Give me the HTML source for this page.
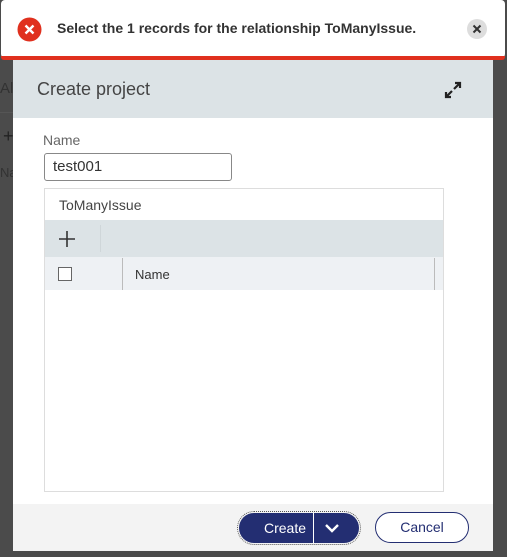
<!DOCTYPE html>
<html><head><style>
body{margin:0;width:507px;height:557px;background:#4b4b4b;font-family:"Liberation Sans",sans-serif;position:relative;overflow:hidden}
.a{position:absolute}
</style></head><body>
<div class="a" style="left:0;top:80px;color:#222;font-size:15px;opacity:.6">All</div>
<div class="a" style="left:0;top:112px;width:13px;height:1px;background:#555"></div>
<div class="a" style="left:3px;top:126px;color:#111;font-size:18px;opacity:.7">+</div>
<div class="a" style="left:0;top:165px;color:#222;font-size:13px;opacity:.6">Na</div>
<div class="a" style="left:13px;top:60px;width:480px;height:491px;background:#fff"></div>
<div class="a" style="left:13px;top:60px;width:480px;height:58px;background:#dce3e6"></div>
<div class="a" style="left:37px;top:79px;font-size:18px;color:#444">Create project</div>
<svg class="a" style="left:444px;top:81px" width="18" height="18" viewBox="0 0 18 18"><path d="M10 8 16 2M11 2h5v5M8 10 2 16M2 11v5h5" stroke="#222" stroke-width="2.2" fill="none"/></svg>
<div class="a" style="left:43px;top:132px;font-size:14px;color:#666">Name</div>
<div class="a" style="left:44px;top:153px;width:186px;height:26px;border:1px solid #888;border-radius:3px;font-size:15px;color:#333;line-height:26px;text-indent:8px;box-sizing:content-box">test001</div>
<div class="a" style="left:44px;top:188px;width:398px;height:302px;border:1px solid #ddd"></div>
<div class="a" style="left:44px;top:491px;width:400px;height:1px;background:#ddd"></div>
<div class="a" style="left:59px;top:197px;font-size:14px;color:#444">ToManyIssue</div>
<div class="a" style="left:45px;top:220px;width:398px;height:37px;background:#dce3e6"></div>
<div class="a" style="left:100px;top:225px;width:1px;height:27px;background:#cfd6d9"></div>
<svg class="a" style="left:58px;top:230px" width="18" height="18"><path d="M9 1v16M1 9h16" stroke="#333" stroke-width="1.6"/></svg>
<div class="a" style="left:45px;top:257px;width:398px;height:33px;background:#eef1f4"></div>
<div class="a" style="left:58px;top:267px;width:12px;height:12px;border:1px solid #666;background:#fff"></div>
<div class="a" style="left:122px;top:258px;width:1px;height:32px;background:#bbb"></div>
<div class="a" style="left:434px;top:258px;width:1px;height:32px;background:#bbb"></div>
<div class="a" style="left:135px;top:267px;font-size:13px;color:#333">Name</div>
<div class="a" style="left:13px;top:504px;width:480px;height:47px;background:#f3f3f3"></div>
<div class="a" style="left:237px;top:511px;width:122px;height:32px;border:1px dotted #555;border-radius:17px"></div>
<div class="a" style="left:239px;top:513px;width:120px;height:30px;background:#232e72;border-radius:15px"></div>
<div class="a" style="left:313px;top:513px;width:1px;height:30px;background:#fff"></div>
<div class="a" style="left:264px;top:520px;font-size:14px;color:#fff">Create</div>
<svg class="a" style="left:324px;top:521px" width="16" height="14"><path d="M2 4 8 10 14 4" stroke="#fff" stroke-width="2.4" fill="none"/></svg>
<div class="a" style="left:375px;top:512px;width:92px;height:29px;border:1px solid #232e72;border-radius:16px;background:#fff;text-align:center;line-height:29px;font-size:14px;color:#232e72">Cancel</div>
<div class="a" style="left:1px;top:0;width:504px;height:58px;background:#fff;border-radius:4px"></div>
<div class="a" style="left:1px;top:56px;width:504px;height:4px;background:#e0301e;border-radius:0 0 3px 3px"></div>
<svg class="a" style="left:17px;top:17px" width="25" height="25"><circle cx="12.5" cy="12.5" r="12" fill="#e0301e"/><path d="M8.5 8.5l8 8M16.5 8.5l-8 8" stroke="#fff" stroke-width="2.4"/></svg>
<div class="a" style="left:57px;top:20px;font-size:14px;font-weight:bold;color:#333">Select the 1 records for the relationship ToManyIssue.</div>
<div class="a" style="left:467px;top:19px;width:20px;height:20px;border-radius:50%;background:#ddd"></div>
<svg class="a" style="left:472px;top:24px" width="10" height="10"><path d="M1.5 1.5l7 7M8.5 1.5l-7 7" stroke="#333" stroke-width="2"/></svg>
</body></html>
